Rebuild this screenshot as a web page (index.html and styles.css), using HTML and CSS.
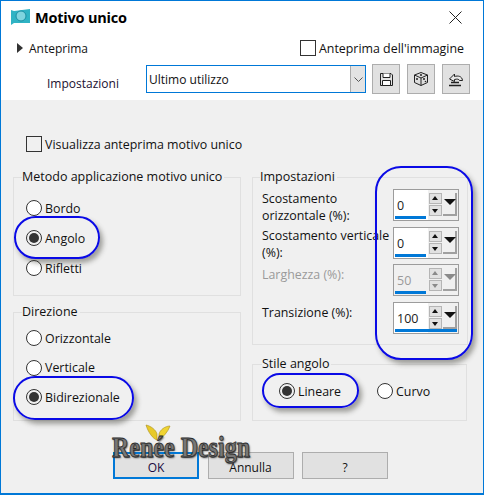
FILE: index.html
```html
<!DOCTYPE html>
<html lang="it">

<head>
    <meta charset="UTF-8">
    <title>Motivo unico</title>
    <link rel="stylesheet" href="styles.css">
</head>

<body>
    <div class="window">
        <div class="top">
            <div class="title-row">
                <svg class="app-icon" width="21" height="18" viewBox="0 0 21 18">
                    <path d="M1 2 L4 3 L20 1 L20 15 L4 15 L1 17 Z" fill="#2fb3c4" />
                    <circle cx="11" cy="8" r="5" fill="#7fd4df" stroke="#1b8fa3" />
                </svg>
                <span class="title">Motivo unico</span>
                <svg class="close" width="13" height="13" viewBox="0 0 13 13">
                    <path d="M0.5 0.5 L12.5 12.5 M12.5 0.5 L0.5 12.5" stroke="#222" stroke-width="1" fill="none" />
                </svg>
            </div>
            <div class="preview-row">
                <span class="arrow"></span>
                <span class="preview-label">Anteprima</span>
                <label class="check image-preview"><span class="box"></span>Anteprima dell'immagine</label>
            </div>
            <div class="settings-row">
                <span class="settings-label">Impostazioni</span>
                <div class="select">
                    <span class="select-value">Ultimo utilizzo</span>
                    <span class="select-btn">
                        <svg width="9" height="5" viewBox="0 0 9 5">
                            <path d="M0.5 0.5 L4.5 4.5 L8.5 0.5" stroke="#555" fill="none" />
                        </svg>
                    </span>
                </div>
                <button class="tool">
                    <svg width="15" height="15" viewBox="0 0 15 15">
                        <path d="M1.5 1.5 H12 L13.5 3 V13.5 H1.5 Z" fill="#e4e4e4" stroke="#222" />
                        <path d="M4 1.5 V5.5 H11 V1.5" fill="#fff" stroke="#222" />
                        <path d="M3.5 8.5 H11.5 V13.5 H3.5 Z" fill="#fff" stroke="#222" />
                    </svg>
                </button>
                <button class="tool">
                    <svg width="16" height="16" viewBox="0 0 16 16">
                        <path d="M8 1.5 L14.5 4 V11.5 L8 14.5 L1.5 11.5 V4 Z" fill="#ddd" stroke="#222" />
                        <path d="M1.5 4 L8 7 L14.5 4 M8 7 V14.5" fill="none" stroke="#222" />
                        <circle cx="8" cy="4" r="1" fill="#222" />
                        <circle cx="4" cy="8" r="1" fill="#222" />
                        <circle cx="11" cy="8" r="1" fill="#222" />
                        <circle cx="12.5" cy="10.5" r="0.8" fill="#222" />
                    </svg>
                </button>
                <button class="tool">
                    <svg width="16" height="15" viewBox="0 0 16 15">
                        <path d="M1.5 7 L6.5 2 V4.5 C10 3.5 14 4 14.5 8.5 H11.5 C11 7 9 6.8 6.5 7.5 V9.5 Z" fill="#e8e8e8" stroke="#222" />
                        <path d="M3 10.5 H11 M1 13.5 H13" stroke="#222" stroke-width="1.4" fill="none" />
                    </svg>
                </button>
            </div>
        </div>

        <div class="main">
            <label class="check show-preview"><span class="box"></span>Visualizza anteprima motivo unico</label>

            <div class="columns">
                <div class="col-left">
                    <fieldset class="group method">
                        <legend>Metodo applicazione motivo unico</legend>
                        <label class="radio"><span class="dot"></span>Bordo</label>
                        <label class="radio on"><span class="dot"></span>Angolo</label>
                        <label class="radio"><span class="dot"></span>Rifletti</label>
                    </fieldset>
                    <fieldset class="group direction">
                        <legend>Direzione</legend>
                        <label class="radio"><span class="dot"></span>Orizzontale</label>
                        <label class="radio"><span class="dot"></span>Verticale</label>
                        <label class="radio on"><span class="dot"></span>Bidirezionale</label>
                    </fieldset>
                </div>

                <div class="col-right">
                    <fieldset class="group params">
                        <legend>Impostazioni</legend>
                        <div class="param">
                            <span class="param-label">Scostamento<br>orizzontale (%):</span>
                            <div class="spin"><span class="spin-value">0</span><span class="spin-bar"></span><span class="spin-arrows"><i class="up"></i><i class="down"></i></span><span class="spin-drop"></span></div>
                        </div>
                        <div class="param">
                            <span class="param-label">Scostamento verticale<br>(%):</span>
                            <div class="spin"><span class="spin-value">0</span><span class="spin-bar"></span><span class="spin-arrows"><i class="up"></i><i class="down"></i></span><span class="spin-drop"></span></div>
                        </div>
                        <div class="param disabled">
                            <span class="param-label">Larghezza (%):</span>
                            <div class="spin"><span class="spin-value">50</span><span class="spin-bar"></span><span class="spin-arrows"><i class="up"></i><i class="down"></i></span><span class="spin-drop"></span></div>
                        </div>
                        <div class="param">
                            <span class="param-label">Transizione (%):</span>
                            <div class="spin"><span class="spin-value">100</span><span class="spin-bar full"></span><span class="spin-arrows"><i class="up"></i><i class="down"></i></span><span class="spin-drop"></span></div>
                        </div>
                    </fieldset>
                    <fieldset class="group corner">
                        <legend>Stile angolo</legend>
                        <label class="radio on"><span class="dot"></span>Lineare</label>
                        <label class="radio"><span class="dot"></span>Curvo</label>
                    </fieldset>
                </div>
            </div>

            <div class="buttons">
                <button class="btn default">OK</button>
                <button class="btn">Annulla</button>
                <button class="btn">?</button>
            </div>
        </div>

        <!-- hand drawn marks on top of the dialog -->
        <span class="mark mark-angolo"></span>
        <span class="mark mark-bidir"></span>
        <span class="mark mark-lineare"></span>
        <span class="mark mark-spin"></span>

        <div class="watermark">
            <svg class="butterfly" width="26" height="18" viewBox="0 0 26 18">
                <path d="M12 16 C8 15 3 8 1 1 C6 2 11 6 12 10 Z" fill="#e8c92a" stroke="#a88f1a" stroke-width="0.6" />
                <path d="M14 16 C18 13 23 8 25 2 C20 2 15 6 14 10 Z" fill="#f0d432" stroke="#a88f1a" stroke-width="0.6" />
            </svg>
            <span class="watermark-text">Renée Design</span>
        </div>
    </div>
</body>

</html>
```

FILE: styles.css
```css
* {
    margin: 0;
    padding: 0;
    box-sizing: border-box;
}

body {
    font-family: 'Open Sans', 'Noto Sans', sans-serif;
    font-size: 12.4px;
    color: #111;
    background: #fff;
}

.window {
    position: relative;
    width: 484px;
    height: 495px;
    border: 1px solid #0078d7;
    border-width: 1px 1px 2px 1px;
    background: #f0f0f0;
    overflow: hidden;
}

/* header */

.top {
    height: 99px;
    background: #fff;
}

.title-row {
    display: flex;
    align-items: center;
    height: 32px;
    padding: 0 21px 0 9px;
}

.app-icon {
    margin-right: 4px;
}

.title {
    font-size: 14.5px;
    font-weight: 700;
    color: #000;
    letter-spacing: -0.2px;
}

.close {
    margin-left: auto;
}

.preview-row {
    display: flex;
    align-items: center;
    height: 24px;
    margin-top: 3px;
    padding-left: 16px;
}

.arrow {
    width: 0;
    height: 0;
    border-left: 6px solid #333;
    border-top: 5px solid transparent;
    border-bottom: 5px solid transparent;
    margin-right: 6px;
}

.preview-label {
    font-size: 12px;
}

.image-preview {
    margin-left: auto;
    margin-right: 19px;
}

.check {
    display: flex;
    align-items: center;
    white-space: nowrap;
}

.box {
    width: 16px;
    height: 16px;
    border: 1px solid #333;
    background: #fff;
    margin-right: 3px;
}

.image-preview .box,
.show-preview .box {
    background: transparent;
}

.settings-row {
    display: flex;
    align-items: center;
    height: 30px;
    margin-top: 4px;
    padding-left: 46px;
}

.settings-label {
    width: 99px;
    font-size: 12px;
    color: #1a1030;
    margin-top: 9px;
}

.select {
    display: flex;
    align-items: center;
    justify-content: space-between;
    width: 220px;
    height: 28px;
    border: 1px solid #0078d7;
    background: #fff;
    padding-left: 2px;
    margin-right: 6px;
}

.select-value {
    font-size: 12px;
}

.select-btn {
    display: flex;
    align-items: center;
    justify-content: center;
    width: 15px;
    height: 26px;
    background: #e3e3e3;
    border-left: 1px solid #aaa;
}

.tool {
    display: flex;
    align-items: center;
    justify-content: center;
    width: 28px;
    height: 30px;
    margin-right: 7px;
    border: 1px solid #adadad;
    background: #e1e1e1;
}

/* body */

.main {
    padding: 35px 16px 0 12px;
}

.show-preview {
    margin-left: 13px;
    height: 18px;
}

.columns {
    display: flex;
    margin-top: 24px;
}

.col-left {
    width: 228px;
    margin-right: 11px;
}

.col-right {
    width: 215px;
    margin-top: -7px;
}

.group {
    position: relative;
    display: block;
    border: 1px solid #e0e0e0;
}

.group legend {
    padding: 0 2px 0 0;
    font-size: 12.5px;
    line-height: 14px;
}

.method {
    height: 126px;
    padding: 16px 0 0 12px;
    margin-top: -7px;
}

.method legend,
.direction legend {
    margin-left: -4px;
}

.direction {
    height: 116px;
    margin-top: 9px;
    padding: 11px 0 0 12px;
}

.radio {
    display: flex;
    align-items: center;
    height: 16px;
    margin-bottom: 14px;
    white-space: nowrap;
}

.direction .radio {
    margin-bottom: 13.5px;
}

.dot {
    position: relative;
    width: 16px;
    height: 16px;
    margin-right: 3px;
    border: 1px solid #333;
    border-radius: 50%;
    background: #fff;
}

.radio.on .dot::after {
    content: '';
    position: absolute;
    left: 2px;
    top: 2px;
    width: 10px;
    height: 10px;
    border-radius: 50%;
    background: #333;
}

.radio.on .dot {
    background: #f0f0f0;
}

/* spinners */

.params {
    height: 175px;
    padding: 7px 0 0 9px;
}

.params legend {
    margin-left: -2px;
}

.param {
    display: flex;
    justify-content: space-between;
    height: 37.67px;
    padding-right: 8px;
}

.param-label {
    width: 131px;
    line-height: 17px;
    white-space: nowrap;
    color: #111;
}

.param:nth-of-type(1) .param-label {
    margin-top: -1px;
}

.param:nth-of-type(2) .param-label {
    margin-top: -2px;
}

.param.disabled .param-label,
.param.disabled .spin-value {
    color: #9a9a9a;
}

.spin {
    position: relative;
    flex: none;
    width: 66px;
    height: 32px;
    margin-top: -2px;
    border: 1px solid #9c9c9c;
    background: linear-gradient(to right, #fff 34px, #f0f0f0 34px);
}

.disabled .spin {
    background: #f0f0f0;
}

.spin-value {
    position: absolute;
    left: 3px;
    top: 7px;
    font-size: 12.5px;
    color: #222;
}

.spin-bar {
    position: absolute;
    left: 1px;
    bottom: 1px;
    width: 31px;
    height: 3px;
    background: #0078d7;
}

.spin-bar.full {
    width: 62px;
}

.spin-arrows {
    position: absolute;
    left: 35px;
    top: 3px;
    display: flex;
    flex-direction: column;
    gap: 1px;
}

.spin-arrows i {
    position: relative;
    display: block;
    width: 13px;
    height: 11px;
    background: #e1e1e1;
    border: 1px solid #b5b5b5;
}

.spin-arrows i::after {
    content: '';
    position: absolute;
    left: 2px;
    width: 0;
    height: 0;
    border-left: 3.5px solid transparent;
    border-right: 3.5px solid transparent;
}

.spin-arrows .up::after {
    top: 2px;
    border-bottom: 4px solid #111;
}

.spin-arrows .down::after {
    top: 3px;
    border-top: 4px solid #111;
}

.spin-drop {
    position: absolute;
    left: 49px;
    top: 3px;
    width: 14px;
    height: 23px;
    background: #f0f0f0;
    border-right: 2px solid #a0a0a0;
    border-bottom: 2px solid #a0a0a0;
}

.spin-drop::after {
    content: '';
    position: absolute;
    left: 1px;
    top: 6px;
    width: 0;
    height: 0;
    border-left: 6px solid transparent;
    border-right: 6px solid transparent;
    border-top: 6px solid #111;
}

.disabled .spin-arrows i::after {
    border-top-color: #8a8a8a;
    border-bottom-color: #8a8a8a;
}

.disabled .spin-drop::after {
    border-top-color: #8a8a8a;
}

/* corner style */

.corner {
    display: flex;
    height: 64px;
    margin-top: 12px;
    padding: 12px 0 0 26px;
}

.corner legend {
    margin-left: -17px;
}

.corner .radio {
    margin-right: 36px;
}

/* bottom buttons */

.buttons {
    display: flex;
    gap: 8.5px;
    margin-top: 31px;
    margin-left: 100px;
}

.btn {
    width: 86px;
    height: 27px;
    border: 1px solid #adadad;
    background: #e1e1e1;
    font-family: inherit;
    font-size: 12px;
    color: #111;
    padding-top: 3px;
}

.btn.default {
    border: 2px solid #0078d7;
    color: #1a0a40;
}

/* annotations */

.mark {
    position: absolute;
    border: 2px solid #0a0ae6;
    box-shadow: 3px 4px 5px rgba(60, 60, 50, 0.45);
}

.mark-angolo {
    left: 13px;
    top: 215px;
    width: 86px;
    height: 43px;
    border-radius: 22px;
}

.mark-bidir {
    left: 12px;
    top: 375px;
    width: 121px;
    height: 44px;
    border-radius: 22px;
}

.mark-lineare {
    left: 261px;
    top: 372px;
    width: 97px;
    height: 35px;
    border-radius: 18px;
}

.mark-spin {
    left: 374px;
    top: 165px;
    width: 98px;
    height: 194px;
    border-radius: 26px;
}

.watermark {
    position: absolute;
    left: 111px;
    top: 423px;
    width: 150px;
}

.butterfly {
    position: absolute;
    left: 33px;
    top: 0;
}

.watermark-text {
    position: absolute;
    left: 0;
    top: 9px;
    font-family: 'Liberation Serif', serif;
    font-size: 30px;
    font-weight: 700;
    line-height: 28px;
    white-space: nowrap;
    color: #777;
    -webkit-text-stroke: 0.8px #2a2a2a;
    text-shadow: 1px 1px 2px #333;
    transform: scaleX(0.8);
    transform-origin: left;
}
```
